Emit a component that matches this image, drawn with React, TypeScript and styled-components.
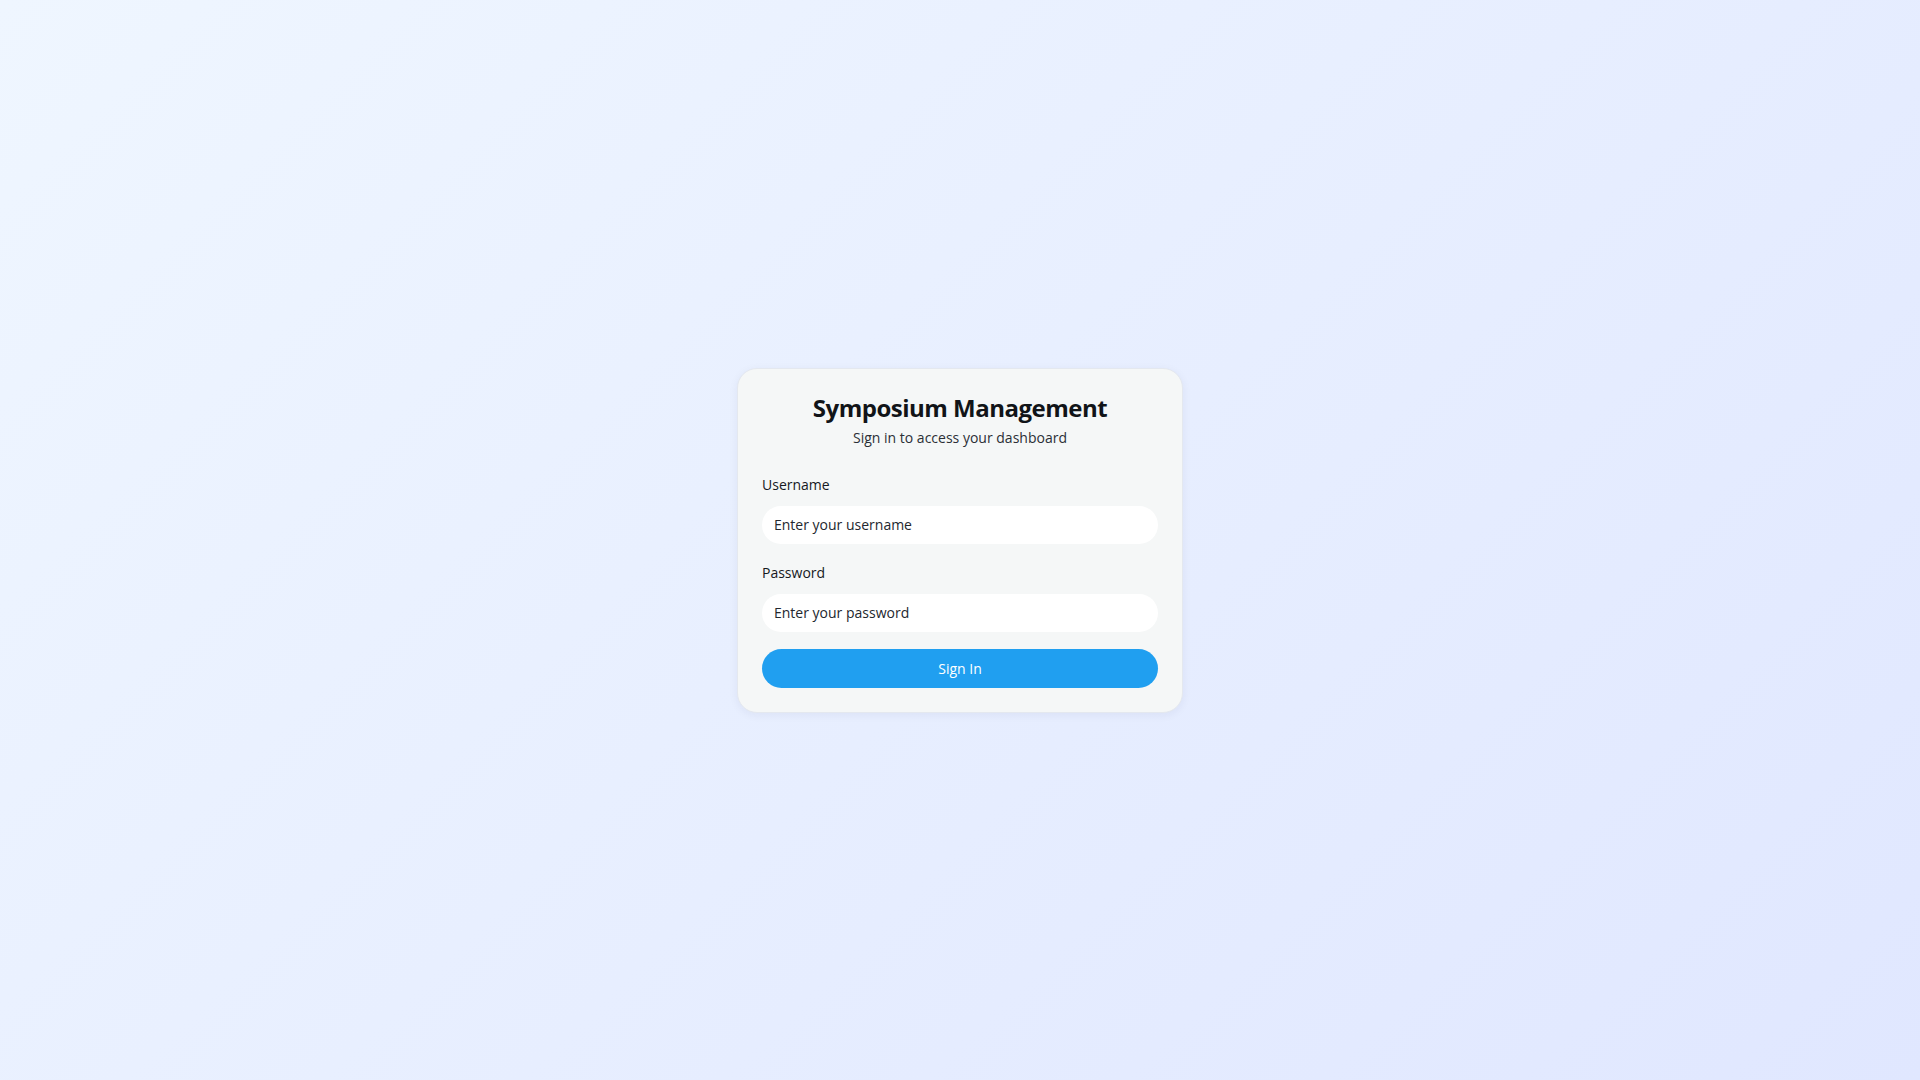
import React from "react";
import styled, { createGlobalStyle } from "styled-components";

const GlobalStyle = createGlobalStyle`
  html, body { margin: 0; padding: 0; }
  body {
    font-family: "Open Sans", "Noto Sans", sans-serif;
    background: linear-gradient(135deg, #eff6ff 0%, #e0e7ff 100%);
    min-height: 100vh;
  }
  * { box-sizing: border-box; }
`;

const Page = styled.div`
  min-height: 100vh;
  display: flex;
  align-items: center;
  justify-content: center;
`;

const Card = styled.form`
  width: 446px;
  padding: 24px 24px 24px;
  background: #f5f7f7;
  border: 1px solid #e4e8ef;
  border-radius: 20px;
  box-shadow: 0 2px 10px rgba(30, 41, 80, 0.06);
  display: flex;
  flex-direction: column;
`;

const Title = styled.h1`
  margin: 0;
  font-size: 24px;
  line-height: 30px;
  font-weight: 700;
  color: #111418;
  text-align: center;
  letter-spacing: -0.5px;
`;

const Subtitle = styled.p`
  margin: 4px 0 0;
  font-size: 14px;
  line-height: 21px;
  color: #2b2f36;
  text-align: center;
`;

const Field = styled.div<{ $first?: boolean }>`
  display: flex;
  flex-direction: column;
  gap: 11px;
  margin-top: ${(p) => (p.$first ? "26px" : "18px")};
`;

const Label = styled.label`
  font-size: 14px;
  line-height: 21px;
  font-weight: 500;
  color: #16191e;
`;

const Input = styled.input`
  height: 38px;
  border: none;
  outline: none;
  border-radius: 19px;
  background: #ffffff;
  padding: 0 12px;
  font-family: inherit;
  font-size: 14px;
  color: #1c1f24;
  &::placeholder { color: #23272e; opacity: 1; }
`;

const Button = styled.button`
  margin-top: 17px;
  height: 39px;
  border: none;
  border-radius: 20px;
  background: #209ff0;
  color: #ffffff;
  font-family: inherit;
  font-size: 14px;
  font-weight: 500;
  cursor: pointer;
`;

export default function App() {
  return (
    <>
      <GlobalStyle />
      <Page>
        <Card onSubmit={(e) => e.preventDefault()}>
          <Title>Symposium Management</Title>
          <Subtitle>Sign in to access your dashboard</Subtitle>
          <Field $first>
            <Label htmlFor="username">Username</Label>
            <Input id="username" placeholder="Enter your username" />
          </Field>
          <Field>
            <Label htmlFor="password">Password</Label>
            <Input id="password" type="password" placeholder="Enter your password" />
          </Field>
          <Button type="submit">Sign In</Button>
        </Card>
      </Page>
    </>
  );
}
